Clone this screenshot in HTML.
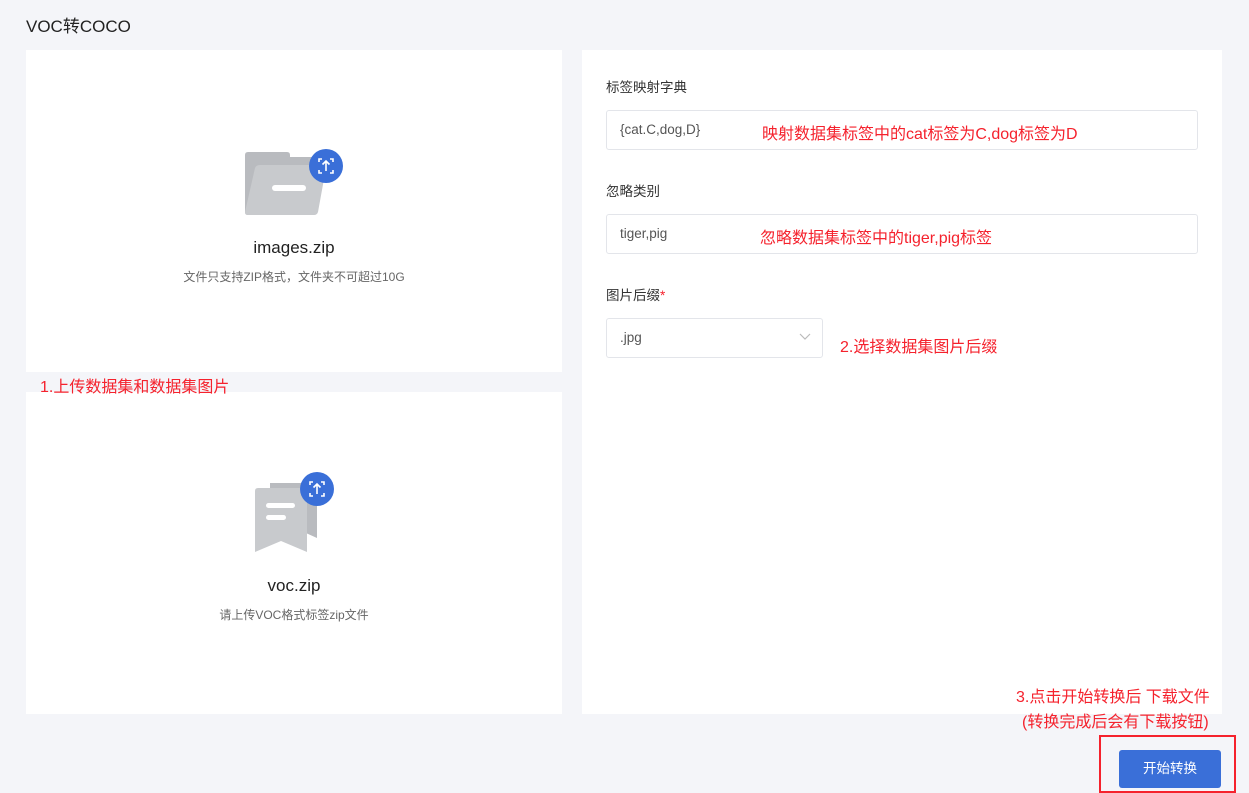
<!DOCTYPE html>
<html><head><meta charset="utf-8"><style>
*{margin:0;padding:0;box-sizing:border-box}
body{width:1249px;height:791px;background:#f4f5f9;font-family:"Liberation Sans","Noto Sans CJK SC",sans-serif;position:relative;overflow:hidden;color:#333}
.a{position:absolute}
.panel{background:#fff;position:absolute}
.red{color:#f5222d;position:absolute;font-size:16px;white-space:nowrap}
.lbl{position:absolute;font-size:13.5px;color:#333}
.inp{position:absolute;border:1px solid #e3e5ea;border-radius:3px;background:#fff;height:40px;font-size:13.5px;color:#555;padding:11px 13px}
</style></head><body>
<div class="a" style="left:26px;top:12px;font-size:17px;color:#222">VOC转COCO</div>

<div class="panel" style="left:26px;top:50px;width:536px;height:322px"></div>
<div class="panel" style="left:26px;top:392px;width:536px;height:322px"></div>
<div class="panel" style="left:582px;top:50px;width:640px;height:664px"></div>

<svg class="a" style="left:244px;top:148px" width="102" height="70" viewBox="0 0 102 70">
<path d="M1 7 Q1 4 4 4 H43 Q46 4 46 7 V9 H70 V67 H4 Q1 67 1 64Z" fill="#b9bbbf"/>
<path d="M11 20 Q12 17 16 17 H80 Q83 17 82 20 L74 64 Q73 67 70 67 H4 Q1 67 1 64Z" fill="#c8cacd"/>
<rect x="28" y="37" width="34" height="6" rx="3" fill="#fff"/>
<circle cx="82" cy="18" r="17" fill="#3a6fd8"/>
<g stroke="#fff" stroke-width="1.6" fill="none"><path d="M75 14v-3h3M86 11h3v3M89 22v3h-3M78 25h-3v-3M82 23v-10M78.5 16.5L82 13l3.5 3.5"/></g>
</svg>
<div class="a" style="left:26px;top:238px;width:536px;text-align:center;font-size:17px;color:#222">images.zip</div>
<div class="a" style="left:26px;top:268px;width:536px;text-align:center;font-size:12px;color:#666">文件只支持ZIP格式，文件夹不可超过10G</div>

<svg class="a" style="left:252px;top:471px" width="84" height="84" viewBox="0 0 84 84">
<path d="M18 12 H62 Q65 12 65 15 V67 L45 58 L18 70Z" fill="#b9bbbf"/>
<path d="M3 20 Q3 17 6 17 H52 Q55 17 55 20 V81 L29 70 L3 81Z" fill="#c8cacd"/>
<rect x="14" y="32" width="29" height="5" rx="2.5" fill="#fff"/>
<rect x="14" y="44" width="20" height="5" rx="2.5" fill="#fff"/>
<circle cx="65" cy="18" r="17" fill="#3a6fd8"/>
<g stroke="#fff" stroke-width="1.6" fill="none"><path d="M58 14v-3h3M69 11h3v3M72 22v3h-3M61 25h-3v-3M65 23v-10M61.5 16.5L65 13l3.5 3.5"/></g>
</svg>
<div class="a" style="left:26px;top:576px;width:536px;text-align:center;font-size:17px;color:#222">voc.zip</div>
<div class="a" style="left:26px;top:606px;width:536px;text-align:center;font-size:12px;color:#666">请上传VOC格式标签zip文件</div>

<div class="red" style="left:40px;top:373px">1.上传数据集和数据集图片</div>

<div class="lbl" style="left:606px;top:76px">标签映射字典</div>
<div class="inp" style="left:606px;top:110px;width:592px">{cat.C,dog,D}</div>
<div class="red" style="left:762px;top:120px">映射数据集标签中的cat标签为C,dog标签为D</div>
<div class="lbl" style="left:606px;top:180px">忽略类别</div>
<div class="inp" style="left:606px;top:214px;width:592px">tiger,pig</div>
<div class="red" style="left:760px;top:224px">忽略数据集标签中的tiger,pig标签</div>
<div class="lbl" style="left:606px;top:284px">图片后缀<span style="color:#f5222d">*</span></div>
<div class="inp" style="left:606px;top:318px;width:217px">.jpg</div>
<svg class="a" style="left:799px;top:333px" width="12" height="8"><path d="M1 1l5 5 5-5" stroke="#bbb" fill="none" stroke-width="1.2"/></svg>
<div class="red" style="left:840px;top:333px">2.选择数据集图片后缀</div>

<div class="red" style="left:1016px;top:683px">3.点击开始转换后 下载文件</div>
<div class="red" style="left:1022px;top:708px">(转换完成后会有下载按钮)</div>
<div class="a" style="left:1099px;top:735px;width:137px;height:58px;border:2px solid #f5222d"></div>
<div class="a" style="left:1119px;top:750px;width:102px;height:38px;background:#3a6fd8;border-radius:3px;color:#fff;font-size:13.5px;text-align:center;line-height:38px">开始转换</div>
</body></html>
